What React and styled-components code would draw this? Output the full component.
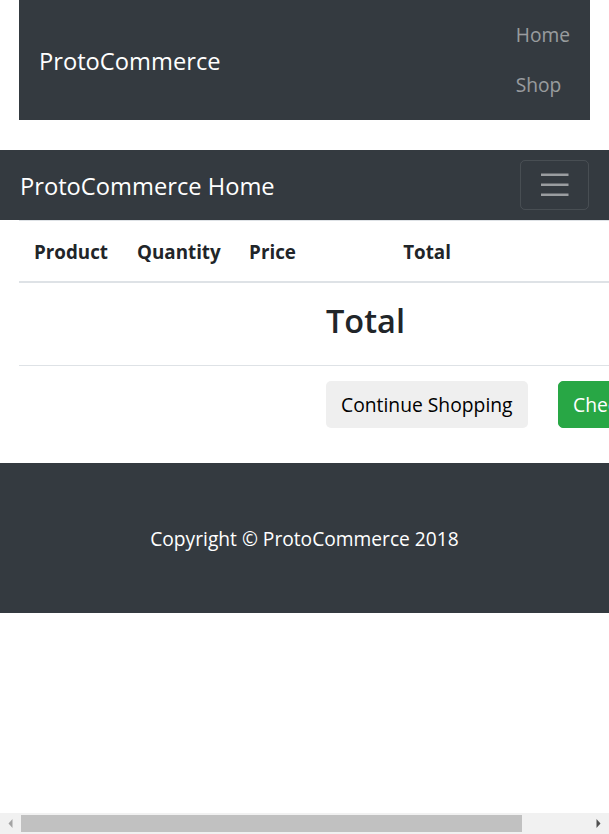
import React from 'react';
import styled, { createGlobalStyle } from 'styled-components';

const Global = createGlobalStyle`
  * { box-sizing: border-box; }
  html, body { margin: 0; padding: 0; }
  body {
    font-family: "Open Sans", "Liberation Sans", sans-serif;
    font-size: 19.2px;
    line-height: 30px;
    color: #212529;
    background: #fff;
  }
`;

const Container = styled.div`
  padding: 0 19px;
`;

const TopNav = styled.nav`
  background: #343a40;
  height: 120px;
  padding: 10px 20px;
  display: flex;
  align-items: center;
  justify-content: space-between;
`;

const Brand = styled.a`
  color: #fff;
  font-size: 23.7px;
  line-height: 37px;
  padding-top: 2px;
  text-decoration: none;
  white-space: nowrap;
`;

const NavList = styled.ul`
  list-style: none;
  margin: 0;
  padding: 0;
  display: flex;
  flex-direction: column;
`;

const NavLink = styled.a`
  display: block;
  padding: 10px 0;
  color: rgba(255, 255, 255, 0.5);
  text-decoration: none;
`;

const MainNav = styled.nav`
  margin-top: 30px;
  background: #343a40;
  height: 70px;
  padding: 10px 20px;
  display: flex;
  align-items: center;
  justify-content: space-between;
`;

const Toggler = styled.button`
  width: 69px;
  height: 50px;
  padding: 0;
  background: transparent;
  border: 1px solid rgba(255, 255, 255, 0.1);
  border-radius: 5px;
  display: flex;
  align-items: center;
  justify-content: center;
`;

const Table = styled.table`
  width: 670px;
  table-layout: fixed;
  border-collapse: collapse;
`;

const Col = styled.col`
  width: ${p => p.$w}px;
`;

const Th = styled.th`
  padding: 16px 15px 14px;
  font-size: 18.8px;
  font-weight: 700;
  text-align: ${p => (p.$center ? 'center' : 'left')};
  vertical-align: bottom;
  white-space: nowrap;
  border-top: 1px solid #dee2e6;
  border-bottom: 2px solid #dee2e6;
`;

const Td = styled.td`
  padding: 15px;
  vertical-align: top;
  border-top: 1px solid #dee2e6;
  white-space: nowrap;
`;

const H3 = styled.h3`
  margin: 0 0 8px;
  padding-top: 2px;
  font-size: 32.5px;
  font-weight: 600;
  line-height: 42px;
`;

const Button = styled.button`
  font-family: inherit;
  font-size: 19.3px;
  line-height: 30px;
  padding: 7.5px 14px;
  border: 1px solid transparent;
  border-radius: 5px;
  white-space: nowrap;
  color: ${p => (p.$success ? '#fff' : '#000')};
  background: ${p => (p.$success ? '#28a745' : '#efefef')};
  border-color: ${p => (p.$success ? '#28a745' : 'transparent')};
`;

const Footer = styled.footer`
  margin-top: 20px;
  background: #343a40;
  height: 150px;
  display: flex;
  align-items: center;
  justify-content: center;
  padding-top: 2px;
  color: #fff;
`;

/* Browser horizontal scrollbar, drawn over the bottom of the viewport */
const ScrollBar = styled.div`
  position: fixed;
  left: 0;
  right: 0;
  bottom: 0;
  height: 21px;
  background: #f1f1f1;
  display: flex;
`;

const ScrollButton = styled.div`
  width: 21px;
  flex: none;
  display: flex;
  align-items: center;
  justify-content: center;
`;

const ScrollTrack = styled.div`
  flex: 1;
  padding: 2px 0;
  display: flex;
`;

const ScrollThumb = styled.div`
  background: #c1c1c1;
`;

export default function App() {
  const viewport = 609;
  const docWidth = 689;
  const trackWidth = viewport - 42;
  const thumb = Math.round((trackWidth * viewport) / docWidth);

  return (
    <>
      <Global />
      <Container>
        <TopNav>
          <Brand href="#">ProtoCommerce</Brand>
          <NavList>
            <li><NavLink href="#">Home</NavLink></li>
            <li><NavLink href="#">Shop</NavLink></li>
          </NavList>
        </TopNav>
      </Container>
      <MainNav>
        <Brand href="#">ProtoCommerce Home</Brand>
        <Toggler aria-label="Toggle navigation">
          <svg width="37.5" height="37.5" viewBox="0 0 30 30">
            <path d="M4 7h22M4 15h22M4 23h22" stroke="rgba(255,255,255,0.5)" strokeWidth="2" />
          </svg>
        </Toggler>
      </MainNav>
      <Container>
        <Table>
          <colgroup>
            <Col $w={103} />
            <Col $w={112} />
            <Col $w={77} />
            <Col $w={232} />
            <Col $w={146} />
          </colgroup>
          <thead>
            <tr>
              <Th>Product</Th>
              <Th>Quantity</Th>
              <Th $center>Price</Th>
              <Th $center>Total</Th>
              <Th />
            </tr>
          </thead>
          <tbody>
            <tr>
              <Td />
              <Td />
              <Td />
              <Td><H3>Total</H3></Td>
              <Td />
            </tr>
            <tr>
              <Td />
              <Td />
              <Td />
              <Td><Button>Continue Shopping</Button></Td>
              <Td><Button $success>Checkout</Button></Td>
            </tr>
          </tbody>
        </Table>
      </Container>
      <Footer>Copyright © ProtoCommerce 2018</Footer>
      <ScrollBar>
        <ScrollButton>
          <svg width="5" height="9" viewBox="0 0 5 9">
            <polygon points="4.5,0 0.5,4.5 4.5,9" fill="#a3a3a3" />
          </svg>
        </ScrollButton>
        <ScrollTrack>
          <ScrollThumb style={{ width: thumb }} />
        </ScrollTrack>
        <ScrollButton>
          <svg width="5" height="9" viewBox="0 0 5 9">
            <polygon points="0.5,0 4.5,4.5 0.5,9" fill="#505050" />
          </svg>
        </ScrollButton>
      </ScrollBar>
    </>
  );
}
